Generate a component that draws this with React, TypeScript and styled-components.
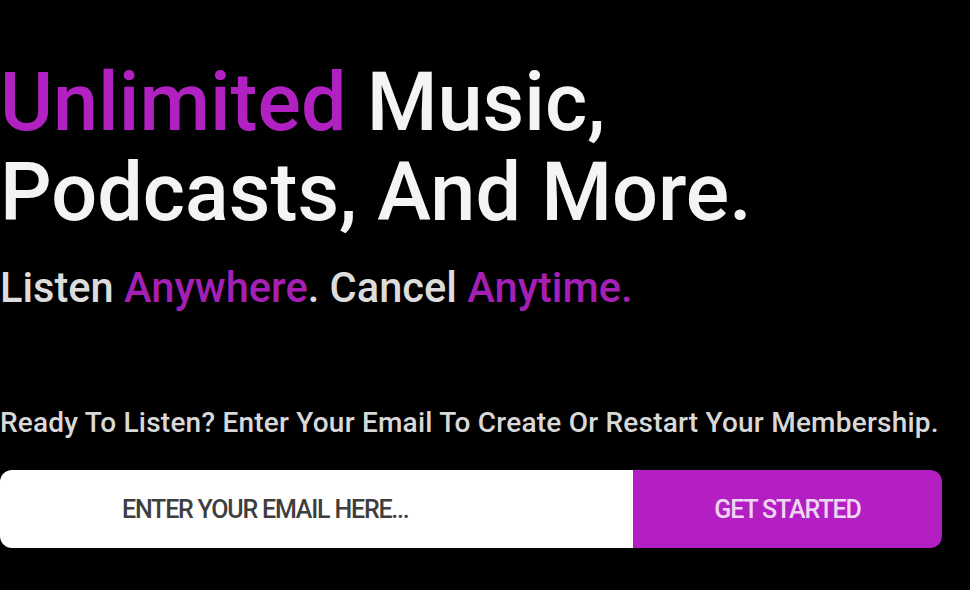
import React from "react";
import styled, { createGlobalStyle } from "styled-components";

const Global = createGlobalStyle`
  html, body { margin: 0; padding: 0; background: #000; }
  body { font-family: Roboto, "Liberation Sans", sans-serif; }
  * { box-sizing: border-box; }
`;

const Page = styled.main`
  width: 970px;
  height: 590px;
  background: #000;
  overflow: hidden;
  padding-top: 58px;
  display: flex;
  flex-direction: column;
`;

const Heading = styled.h1`
  margin: 0;
  font-family: Roboto, "Liberation Sans", sans-serif;
  font-weight: 500;
  font-size: 81px;
  line-height: 90px;
  color: #f4f4f4;
`;

const Accent = styled.span<{ $tone?: "bright" | "soft" }>`
  color: ${(p) => (p.$tone === "soft" ? "#a41fb4" : "#b121c2")};
`;

const Tagline = styled.p`
  margin: 26px 0 0;
  font-weight: 500;
  font-size: 41.6px;
  line-height: 48px;
  color: #dcdcdc;
`;

const Prompt = styled.p`
  margin: 95px 0 0;
  font-weight: 500;
  font-size: 28px;
  line-height: 32px;
  color: #d8d8d8;
  letter-spacing: 0.22px;
  white-space: nowrap;
`;

const Form = styled.form`
  margin-top: 31px;
  width: 942px;
  height: 78px;
  display: flex;
  border-radius: 12px;
  overflow: hidden;
`;

const EmailField = styled.div`
  width: 633px;
  background: #fff;
  display: flex;
  align-items: center;
  padding-left: 122px;
  font-weight: 500;
  font-size: 25px;
  letter-spacing: -1.2px;
  color: #3e3e3e;
  text-transform: uppercase;
`;

const Submit = styled.button`
  flex: 1;
  border: none;
  background: #b31fc3;
  color: #efd6f2;
  font-family: Roboto, "Liberation Sans", sans-serif;
  font-weight: 500;
  font-size: 25px;
  letter-spacing: -1.1px;
  text-transform: uppercase;
  padding: 0;
  cursor: pointer;
`;

export default function App() {
  return (
    <>
      <Global />
      <Page>
        <Heading>
          <Accent>Unlimited</Accent> Music,
          <br />
          Podcasts, And More.
        </Heading>
        <Tagline>
          Listen <Accent $tone="soft">Anywhere</Accent>. Cancel{" "}
          <Accent $tone="soft">Anytime.</Accent>
        </Tagline>
        <Prompt>Ready To Listen? Enter Your Email To Create Or Restart Your Membership.</Prompt>
        <Form onSubmit={(e) => e.preventDefault()}>
          <EmailField>Enter your email here...</EmailField>
          <Submit type="submit">Get Started</Submit>
        </Form>
      </Page>
    </>
  );
}
